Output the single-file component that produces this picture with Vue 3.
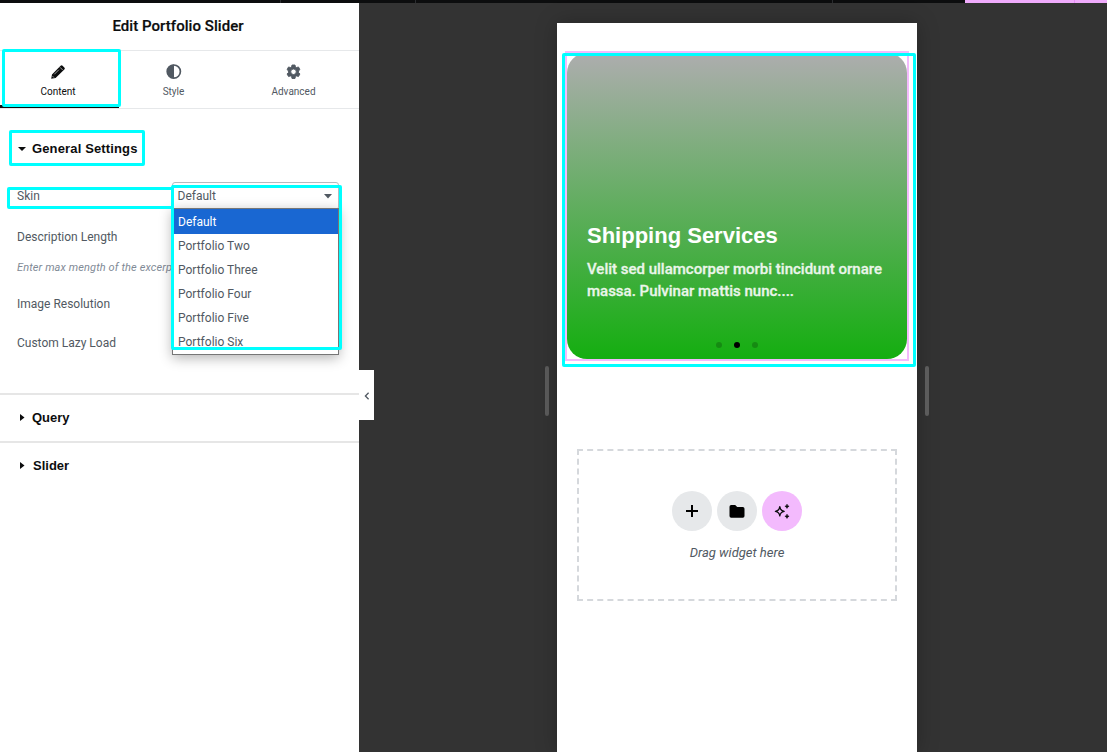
<script setup>
const options = ['Default', 'Portfolio Two', 'Portfolio Three', 'Portfolio Four', 'Portfolio Five', 'Portfolio Six']
</script>

<template>
  <div class="editor">
    <header class="topbar"><i class="t1"></i><i class="t2"></i><i class="t3"></i><b><i></i></b></header>
    <div class="body">
      <aside class="panel">
        <h1>Edit Portfolio Slider</h1>
        <nav>
          <div class="tab active">
            <svg width="16" height="16" viewBox="0 0 16 16"><path d="M1.200 14.700l.8-4.300L10.600 1.700c.7-.7 1.300-.7 2 0l1.700 1.700c.7.7.7 1.300 0 2L5.600 14z" fill="#0c0d0e"/><path d="M4.300 10.300l4.600-4.600M2.500 12.100l1.500 1.500M10 3.300l2.700 2.700" stroke="#fff" stroke-width=".6"/></svg>
            <span>Content</span>
          </div>
          <div class="tab">
            <svg width="16" height="16" viewBox="0 0 16 16"><circle cx="7.800" cy="7.600" r="6.600" fill="none" stroke="#515962" stroke-width="1.700"/><path d="M8 .6a7 7 0 0 0 0 14z" fill="#515962"/></svg>
            <span>Style</span>
          </div>
          <div class="tab">
            <svg width="16" height="16" viewBox="0 0 16 16"><path fill="#515962" stroke="#515962" stroke-width=".9" stroke-linejoin="round" fill-rule="evenodd" d="M6 1h3l.45 1.900 1.150.65 1.850-.6 1.500 2.600-1.400 1.350v1.700l1.400 1.350-1.500 2.600-1.850-.6-1.150.65L9 14.500H6l-.45-1.900-1.150-.65-1.850.6-1.500-2.600L2.450 8.600V6.900L1.050 5.550l1.500-2.600 1.850.6 1.150-.65zM7.500 5a2.750 2.750 0 1 0 0 5.500 2.750 2.750 0 0 0 0-5.500z"/></svg>
            <span>Advanced</span>
          </div>
        </nav>
        <section class="general">
          <h2 class="open"><svg width="8" height="5"><path d="M0 0h8L4 4z" fill="#0c0d0e"/></svg>General Settings</h2>
          <div class="row skin">
            <label>Skin</label>
            <div class="select">
              Default<svg width="8" height="5"><path d="M0 0h8L4 4.600z" fill="#515962"/></svg>
              <ul class="menu">
                <li v-for="(o, i) in options" :key="o" :class="{ on: i === 0 }">{{ o }}</li>
              </ul>
            </div>
          </div>
          <div class="row desc">Description Length</div>
          <p>Enter max mength of the excerpt</p>
          <div class="row image">Image Resolution</div>
          <div class="row lazy">Custom Lazy Load</div>
        </section>
        <section class="closed"><h2><svg width="5" height="8"><path d="M0 0v7L4.500 3.500z" fill="#0c0d0e"/></svg>Query</h2></section>
        <section class="closed slider"><h2><svg width="5" height="8"><path d="M0 0v7L4.500 3.500z" fill="#0c0d0e"/></svg>Slider</h2></section>
        <button class="collapse"><svg width="6" height="8" viewBox="0 0 6 8"><path d="M4.600.8L1.400 4l3.200 3.200" fill="none" stroke="#515962" stroke-width="1.300"/></svg></button>
      </aside>
      <main>
        <i class="handle"></i>
        <div class="device">
          <article class="card">
            <h3>Shipping Services</h3>
            <p>Velit sed ullamcorper morbi tincidunt ornare massa. Pulvinar mattis nunc....</p>
            <div class="dots"><i></i><i class="cur"></i><i></i></div>
          </article>
          <div class="drop">
            <div class="buttons">
              <span><svg width="14" height="14"><path d="M7 1v12M1 7h12" stroke="#000" stroke-width="2"/></svg></span>
              <span><svg width="16" height="14"><path d="M2.200 1h4l2 2h5.600q1.700 0 1.700 1.700v7.300q0 1.700-1.700 1.700H2.200Q.5 13.700.5 12V2.700Q.5 1 2.200 1z" fill="#000"/></svg></span>
              <span class="ai"><svg width="16" height="16" viewBox="0 0 16 16"><path d="M5.800 3.700Q6.300 7.700 10.200 8.300 6.300 8.900 5.800 12.900 5.300 8.900 1.400 8.300 5.300 7.700 5.800 3.700z" fill="none" stroke="#0c0d0e" stroke-width="1.300" stroke-linejoin="round"/><path d="M13 1.200q.3 1.800 2.100 2.100-1.800.3-2.100 2.100-.3-1.800-2.100-2.100 1.800-.3 2.100-2.100zM13 11.200q.3 1.800 2.100 2.100-1.800.3-2.100 2.100-.3-1.800-2.100-2.100 1.800-.3 2.100-2.100z" fill="#0c0d0e" stroke="#0c0d0e" stroke-width=".6"/></svg></span>
            </div>
            <em>Drag widget here</em>
          </div>
        </div>
        <i class="handle"></i>
      </main>
    </div>
    <div class="mark m-content"></div>
    <div class="mark m-general"></div>
    <div class="mark m-skin"></div>
    <div class="mark m-select"></div>
    <div class="mark m-card"></div>
  </div>
</template>

<style>
body { margin: 0; overflow: hidden; }
</style>
<style scoped>
* { box-sizing: border-box; }
h1, h2, h3, p, ul { margin: 0; padding: 0; list-style: none; }
svg { display: block; flex: none; }
.editor { position: relative; width: 1107px; height: 752px; overflow: hidden; display: flex; flex-direction: column; font-family: Roboto, "Liberation Sans", sans-serif; background: #333; }
.topbar { display: flex; height: 3px; background: #0c0d0e; flex: none; }
.topbar > i { border-right: 1px solid #2b2d30; }
.t1 { width: 281px; } .t2 { width: 135px; } .t3 { width: 417px; }
.topbar b { margin-left: auto; width: 142px; background: #f0abfc; }
.topbar b i { display: block; width: 110px; height: 3px; border-right: 1px solid #e58cf5; }
.body { display: flex; flex: 1; min-height: 0; }
.panel { position: relative; width: 359px; background: #fff; color: #515962; font-size: 12px; flex: none; }
h1 { height: 47px; line-height: 46px; text-align: center; font-size: 15px; font-weight: 500; color: #0c0d0e; padding-right: 3px; letter-spacing: .05px; -webkit-text-stroke: .2px; }
nav { display: flex; height: 59px; border: solid #e6e8ea; border-width: 1px 0; }
.tab { width: 120px; display: flex; flex-direction: column; align-items: center; padding-top: 13px; font-size: 10px; }
.tab:first-child { width: 119px; padding-right: 3px; }
.tab:nth-child(2) { width: 114px; padding-right: 5px; }
.tab:nth-child(3) { width: 126px; padding-right: 5px; }
.tab span { line-height: 14px; margin-top: 5px; }
.active { color: #0c0d0e; box-shadow: inset 0 -3px #0c0d0e; height: 57px; }
h2 { display: flex; align-items: center; font: bold 13px/18px "Liberation Sans", Arial, sans-serif; color: #0c0d0e; }
.general { height: 284px; padding-top: 31px; }
.open { padding-left: 18px; gap: 6px; letter-spacing: .14px; }
.row { padding-left: 17px; line-height: 16px; }
.skin { display: flex; margin-top: 24px; height: 28px; }
.skin label { width: 155px; padding-top: 6px; }
.select { position: relative; width: 167px; height: 28px; border: 1px solid #b5babf; border-radius: 3px; padding: 5px 6px 0 4.5px; display: flex; justify-content: space-between; }
.select > svg { margin-top: 6px; }
.menu { position: absolute; z-index: 2; left: -1px; top: 25px; width: 167px; height: 147px; background: #fff; border: 1px solid #767676; box-shadow: 0 3px 12px rgba(0,0,0,.3); }
.menu li { height: 24px; line-height: 24px; padding-left: 5px; }
.menu .on { height: 25px; line-height: 26px; background: #1967d2; color: #fff; }
.desc { margin-top: 19px; }
.general p { padding-left: 17px; margin-top: 16px; width: 190px; overflow: hidden; white-space: nowrap; font: italic 11px/14px Roboto, sans-serif; letter-spacing: .12px; color: #818a96; }
.image { margin-top: 21px; }
.lazy { margin-top: 23px; }
.closed { height: 48px; border-top: 2px solid #e6e6e6; padding: 14px 0 0 20px; }
.closed h2 { gap: 7px; }
.slider h2 { gap: 8px; }
.collapse { position: absolute; left: 359px; top: 367px; width: 15px; height: 50px; border: 0; padding: 1px 0 0; display: flex; align-items: center; justify-content: center; background: #fff; }
main { flex: 1; display: flex; padding: 20px 0 0 186px; gap: 8px; background: #333; }
.handle { width: 4px; height: 50px; margin-top: 343px; border-radius: 3px; background: #5c5c5c; }
.device { width: 360px; background: #fff; padding: 30px 10px 0; box-shadow: 0 0 20px rgba(0,0,0,.25); }
.card { height: 306px; border-radius: 20px; background: linear-gradient(#adadae, #14ae10); position: relative; padding: 169px 20px 0; color: #fff; }
.card::before { content: ""; position: absolute; inset: -2px; border: 2px solid #f3bafd; }
h3 { font: bold 22px/28px "Liberation Sans", Arial, sans-serif; white-space: nowrap; }
.card p { margin-top: 8px; font-size: 15px; line-height: 22px; font-weight: 500; color: #eaf5ea; -webkit-text-stroke: .3px; }
.dots { position: absolute; left: 0; right: 0; top: 289px; display: flex; gap: 12px; justify-content: center; }
.dots i { width: 6px; height: 6px; border-radius: 50%; background: rgba(0,0,0,.2); }
.dots .cur { background: #000; }
.drop { margin: 90px 10px 0; height: 152px; border: 2px dashed #d5d8dc; display: flex; flex-direction: column; align-items: center; padding-top: 40px; color: #515962; }
.buttons { display: flex; gap: 5px; }
.buttons span { width: 40px; height: 40px; border-radius: 50%; background: #e6e8ea; display: grid; place-items: center; }
.buttons .ai { background: #f3bafd; }
.drop em { margin-top: 14px; font-size: 13px; line-height: 16px; }
.mark { position: absolute; z-index: 5; border: 3px solid #0ff; border-radius: 2px; pointer-events: none; }
.m-content { left: 2px; top: 49px; width: 119px; height: 58px; }
.m-general { left: 9px; top: 130px; width: 136px; height: 36px; }
.m-skin { left: 7px; top: 187px; width: 167px; height: 22px; }
.m-select { left: 171px; top: 185px; width: 171px; height: 165px; }
.m-card { left: 562px; top: 53px; width: 354px; height: 314px; }
</style>
